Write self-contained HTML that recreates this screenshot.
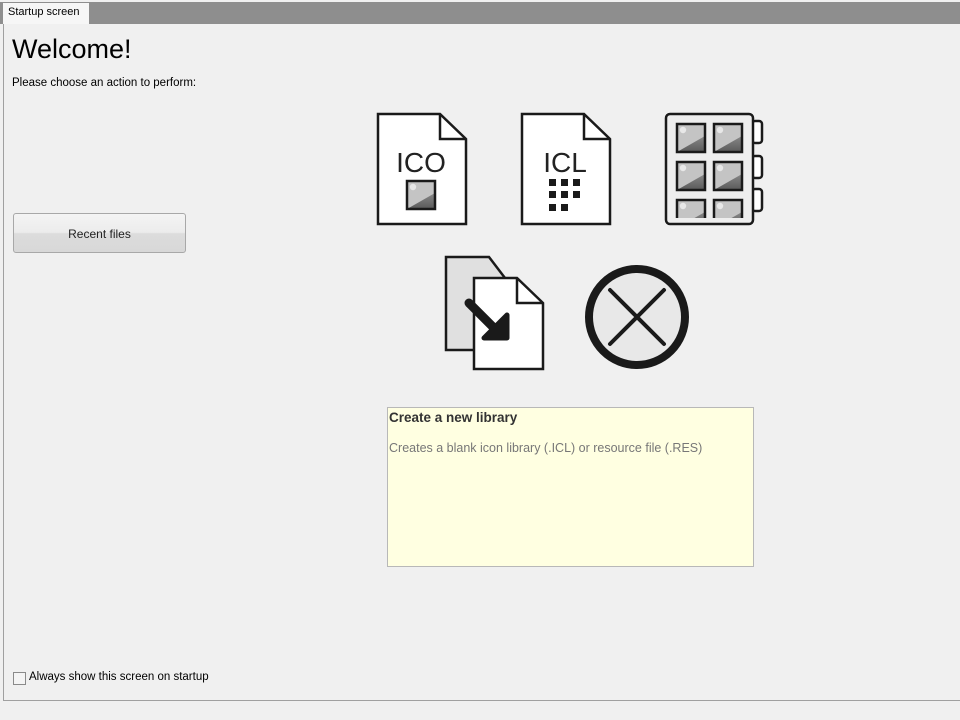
<!DOCTYPE html>
<html><head><style>
*{margin:0;padding:0}
body{width:960px;height:720px;background:#f0f0f0;position:relative;overflow:hidden;font-family:"Liberation Sans",sans-serif}
.topbar{position:absolute;left:0;top:2px;width:960px;height:22px;background:#8e8e8e}
.tab{position:absolute;left:3px;top:3px;width:86px;height:21px;background:#f6f6f6;font-size:11px;line-height:19px;padding-left:5px;box-sizing:border-box;color:#000}
.panel{position:absolute;left:3px;top:24px;width:960px;height:677px;border-left:1px solid #a0a0a0;border-bottom:1px solid #a0a0a0;box-sizing:border-box;background:#f0f0f0}
.abs{position:absolute}
</style></head><body>
<div class="topbar"></div>
<div class="panel"></div>
<div class="tab">Startup screen</div>
<div class="abs" style="left:12px;top:34px;font-size:27px;color:#000">Welcome!</div>
<div class="abs" style="left:12px;top:77px;font-size:11.5px;color:#000">Please choose an action to perform:</div>
<div class="abs" style="left:13px;top:213px;width:173px;height:40px;box-sizing:border-box;border:1px solid #a8a8a8;border-radius:3px;background:linear-gradient(#f4f4f4 0%,#ececec 48%,#dcdcdc 52%,#d8d8d8 100%);font-size:12px;text-align:center;line-height:40px;color:#222">Recent files</div>
<svg class="abs" style="left:0;top:0" width="960" height="720">
<defs>
<linearGradient id="dg" x1="0" y1="0" x2="0" y2="1"><stop offset="0" stop-color="#888"/><stop offset="1" stop-color="#5a5a5a"/></linearGradient>
<g id="tile">
<rect x="0" y="0" width="28" height="28" fill="#c4c4c4"/>
<polygon points="0,28 28,12 28,28" fill="url(#dg)"/>
<circle cx="6" cy="6" r="3.2" fill="#e8e8e8"/>
<rect x="0" y="0" width="28" height="28" fill="none" stroke="#1a1a1a" stroke-width="2.5"/>
</g>
</defs>
<path d="M378,114 H440 L466,139 V224 H378 Z" fill="#fff" stroke="#1a1a1a" stroke-width="2.5"/>
<path d="M440,114 V139 H466" fill="none" stroke="#1a1a1a" stroke-width="2.5"/>
<text x="421" y="172" font-family="Liberation Sans,sans-serif" font-size="28" text-anchor="middle" fill="#222">ICO</text>
<g transform="translate(407,181)"><use href="#tile"/></g>
<path d="M522,114 H584 L610,139 V224 H522 Z" fill="#fff" stroke="#1a1a1a" stroke-width="2.5"/>
<path d="M584,114 V139 H610" fill="none" stroke="#1a1a1a" stroke-width="2.5"/>
<text x="565" y="172" font-family="Liberation Sans,sans-serif" font-size="28" text-anchor="middle" fill="#222">ICL</text>
<g fill="#1a1a1a">
<rect x="549" y="179" width="7" height="7"/><rect x="561" y="179" width="7" height="7"/><rect x="573" y="179" width="7" height="7"/>
<rect x="549" y="191" width="7" height="7"/><rect x="561" y="191" width="7" height="7"/><rect x="573" y="191" width="7" height="7"/>
<rect x="549" y="204" width="7" height="7"/><rect x="561" y="204" width="7" height="7"/>
</g>
<rect x="752" y="121" width="10" height="22" rx="3" fill="#fff" stroke="#1a1a1a" stroke-width="2.5"/>
<rect x="752" y="156" width="10" height="22" rx="3" fill="#fff" stroke="#1a1a1a" stroke-width="2.5"/>
<rect x="752" y="189" width="10" height="22" rx="3" fill="#fff" stroke="#1a1a1a" stroke-width="2.5"/>
<rect x="666" y="114" width="87" height="110" rx="4" fill="#eeeeee" stroke="#1a1a1a" stroke-width="2.5"/>
<g transform="translate(677,124)"><use href="#tile"/></g>
<g transform="translate(714,124)"><use href="#tile"/></g>
<g transform="translate(677,162)"><use href="#tile"/></g>
<g transform="translate(714,162)"><use href="#tile"/></g>
<svg x="675" y="198" width="72" height="20"><g transform="translate(2,2)"><use href="#tile"/></g><g transform="translate(39,2)"><use href="#tile"/></g></svg>
<path d="M446,257 H489 L505,278 V350 H446 Z" fill="#e0e0e0" stroke="#1a1a1a" stroke-width="2.5"/>
<path d="M474,278 H517 L543,303 V369 H474 Z" fill="#fff" stroke="#1a1a1a" stroke-width="2.5"/>
<path d="M517,278 V303 H543" fill="none" stroke="#1a1a1a" stroke-width="2.5"/>
<path d="M469,303 L497,331" stroke="#1a1a1a" stroke-width="9" stroke-linecap="round"/>
<path d="M507,315 V338 H484 Z" fill="#1a1a1a" stroke="#1a1a1a" stroke-width="5" stroke-linejoin="round"/>
<circle cx="637" cy="317" r="48" fill="#e8e8e8" stroke="#1a1a1a" stroke-width="8"/>
<path d="M610,290 L664,344 M664,290 L610,344" stroke="#1a1a1a" stroke-width="4" stroke-linecap="round"/>
<rect x="13.5" y="672.5" width="12" height="12" fill="#f4f4f4" stroke="#8a8a8a"/>
</svg>
<div class="abs" style="left:387px;top:407px;width:367px;height:160px;box-sizing:border-box;border:1px solid #b8b8b8;background:#ffffe1">
<div style="position:absolute;left:1px;top:2px;font-size:13.5px;font-weight:bold;color:#333">Create a new library</div>
<div style="position:absolute;left:1px;top:33px;font-size:12.5px;color:#777">Creates a blank icon library (.ICL) or resource file (.RES)</div>
</div>
<div class="abs" style="left:29px;top:671px;font-size:11.5px;color:#000">Always show this screen on startup</div>
</body></html>
